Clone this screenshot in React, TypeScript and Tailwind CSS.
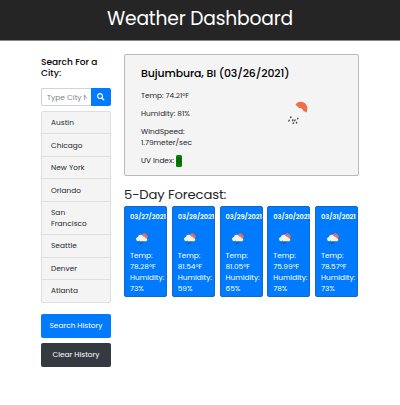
import React from "react";

const cities = ["Austin", "Chicago", "New York", "Orlando", "San Francisco", "Seattle", "Denver", "Atlanta"];

const forecast = [
  { date: "03/27/2021", temp: "78.28°F", humidity: "73%" },
  { date: "03/28/2021", temp: "81.54°F", humidity: "59%" },
  { date: "03/29/2021", temp: "81.05°F", humidity: "65%" },
  { date: "03/30/2021", temp: "75.99°F", humidity: "78%" },
  { date: "03/31/2021", temp: "78.57°F", humidity: "73%" },
];

function RainIcon({ className }: { className: string }) {
  return (
    <svg viewBox="0 0 24 24" className={className}>
      <path d="M11.3 4.2C12.5 1 15.5.3 17.8.8c3.6.7 6 4 5.6 7.4-.1 1.6-.7 2.8-1.4 3.6-1-1-1.8-1.2-2.7-1.5-.6-2-2.2-3-4.3-3-.8-1.5-2.2-2.5-3.7-3.1z" fill="#ec6e4c" />
      <path d="M5 16.5C1.8 16.5 0 14.5 0 12.2 0 9.8 1.8 8.2 3.9 8 4.4 5.5 6.5 3.7 9.3 3.7c2.4 0 4.2 1.2 5.1 3.3 2.7-.3 4.6 1.2 5 3.3 1.9.2 3.2 1.5 3.2 3.2 0 1.7-1.5 3-3.6 3z" fill="#f4f4f4" />
      <path d="M6.9 15.9l-.3.7M5.2 19.2l-.3.9M8.9 18.8l-.3.9M11 19l-.3.8M13.9 17.3l-.2.6M12.7 21.3l-.3.7M9.5 21.9l-.3.5" fill="none" stroke="#484848" strokeWidth="1.4" strokeLinecap="round" />
    </svg>
  );
}

export default function App() {
  return (
    <div className="h-[405px] overflow-hidden bg-white font-['Poppins','Inter',sans-serif] text-[7.35px] leading-[11px] text-[#212529]">
      <header className="h-[41px] border-b border-[#8a8a84] bg-[#252525] pt-[5px] text-center text-[18.7px] leading-[27px] tracking-[-0.18px] text-white">
        Weather Dashboard
      </header>
      <div className="flex gap-[13px] pl-[41px] pt-[13px]">
        <aside className="w-[70px] shrink-0">
          <h2 className="pt-[3px] text-[9px] font-medium leading-[11px] text-black">
            Search For a
            <br />
            City:
          </h2>
          <div className="mt-[9px] flex h-[18px]">
            <input
              placeholder="Type City Name"
              className="w-[50px] rounded-l-[2px] border border-r-0 border-[#ced4da] bg-white pl-[5px] pr-1 text-[7.5px] placeholder:text-[#7c848b]"
            />
            <button className="flex w-5 items-center justify-center rounded-r-[2px] bg-[#007bff]">
              <svg viewBox="0 0 512 512" className="h-[7.5px] w-[7.5px] fill-white">
                <path d="M505 442.7 405.3 343c-4.5-4.5-10.6-7-17-7H372c27.600-35.300 44-79.700 44-128C416 93.100 322.900 0 208 0S0 93.100 0 208s93.100 208 208 208c48.300 0 92.700-16.400 128-44v16.300c0 6.400 2.500 12.500 7 17l99.700 99.700c9.400 9.400 24.600 9.400 33.900 0l28.300-28.300c9.400-9.400 9.400-24.600.1-34zM208 336c-70.700 0-128-57.200-128-128 0-70.700 57.200-128 128-128 70.700 0 128 57.200 128 128 0 70.700-57.200 128-128 128z" />
              </svg>
            </button>
          </div>
          <ul className="mt-[5px] divide-y divide-[#dfdfdf] rounded-[2px] border border-[#dfdfdf] bg-[#f4f4f4]">
            {cities.map((city) => (
              <li key={city} className="py-[5.22px] pl-[9px] pr-[12px] leading-[11px] tracking-[0.05px]">
                {city}
              </li>
            ))}
          </ul>
          <button className="mt-[11px] block h-6 w-full whitespace-nowrap rounded-[2px] bg-[#007bff] text-[7.4px] text-white">
            Search History
          </button>
          <button className="mt-[5px] block h-6 w-full whitespace-nowrap rounded-[2px] bg-[#343a40] text-[7.4px] text-white">
            Clear History
          </button>
        </aside>
        <main className="w-[235px] shrink-0">
          <section className="flex h-[122px] rounded-[2px] border border-[#b9b9b9] bg-[#f4f4f4] pl-[16px]">
            <div className="w-[143px] shrink-0 whitespace-nowrap pt-[11px]">
              <h2 className="text-[10.9px] font-medium leading-[16px] tracking-[-0.1px] text-black">Bujumbura, BI (03/26/2021)</h2>
              <p className="mt-[8px]">Temp: 74.21°F</p>
              <p className="mt-[7.4px]">Humidity: 81%</p>
              <p className="mt-[6.6px]">
                WindSpeed:
                <br />
                1.79meter/sec
              </p>
              <p className="mt-[6.8px] flex items-center">
                UV Index:
                <span className="ml-[2px] h-3 w-[6px] rounded-[1.5px] bg-[#008000] text-center leading-[12px]">0</span>
              </p>
            </div>
            <RainIcon className="mt-[46px] h-6 w-6" />
          </section>
          <h2 className="mt-[10px] whitespace-nowrap text-[13.2px] leading-[18px] tracking-[-0.14px]">5-Day Forecast:</h2>
          <div className="mt-[2px] flex gap-[4.75px]">
            {forecast.map((day) => (
              <article key={day.date} className="h-[91px] w-[43px] shrink-0 whitespace-nowrap rounded-[2px] border border-[#1769c0] bg-[#007bff] pl-[5px] pt-[4px] text-white">
                <h3 className="text-[6.7px] font-semibold leading-[11px] tracking-[-0.1px]">{day.date}</h3>
                <RainIcon className="ml-[6px] mt-[11px] h-3 w-3" />
                <p className="mt-[5px] text-[7.3px]">
                  Temp:
                  <br />
                  {day.temp}
                  <br />
                  Humidity:
                  <br />
                  {day.humidity}
                </p>
              </article>
            ))}
          </div>
        </main>
      </div>
    </div>
  );
}
